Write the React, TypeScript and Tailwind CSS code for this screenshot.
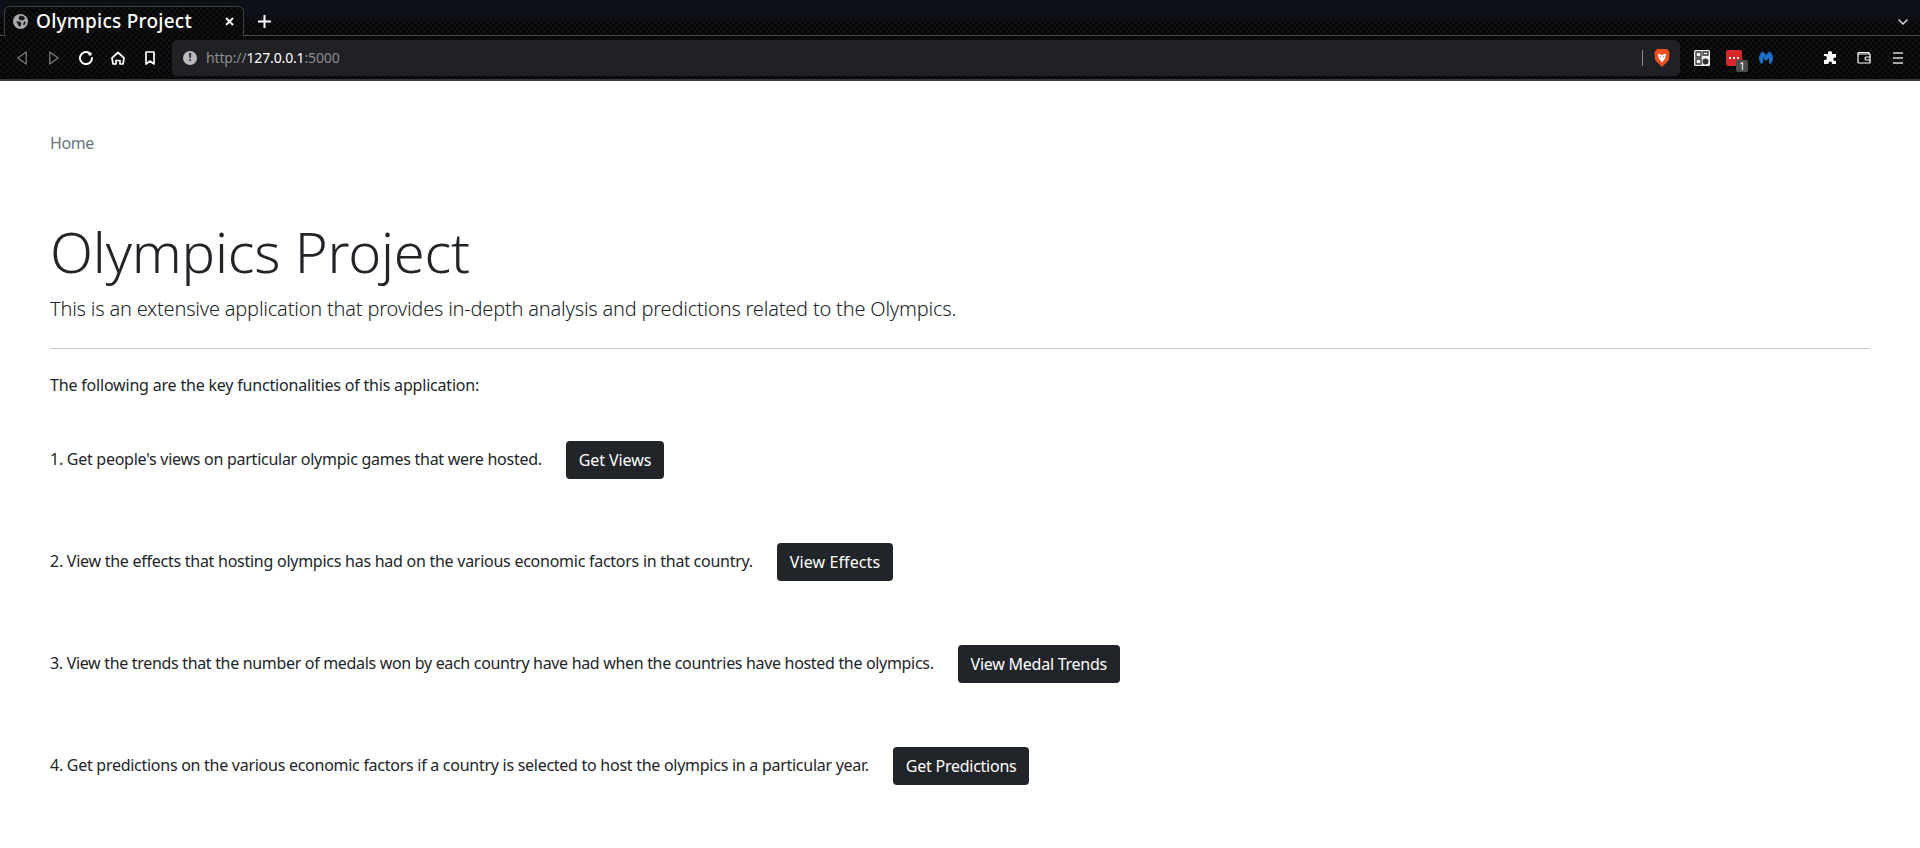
import React from "react";

const rows = [
  { t: "1. Get people's views on particular olympic games that were hosted.", b: "Get Views", tc: "tracking-[-0.265px]", bc: "tracking-[-0.1px]" },
  { t: "2. View the effects that hosting olympics has had on the various economic factors in that country.", b: "View Effects", tc: "tracking-[-0.26px]", bc: "tracking-[0.1px]" },
  { t: "3. View the trends that the number of medals won by each country have had when the countries have hosted the olympics.", b: "View Medal Trends", tc: "tracking-[-0.32px]", bc: "tracking-[-0.25px]" },
  { t: "4. Get predictions on the various economic factors if a country is selected to host the olympics in a particular year.", b: "Get Predictions", tc: "tracking-[-0.27px]", bc: "tracking-[-0.25px]" },
];

function Tri({ flip, cls }: { flip?: boolean; cls: string }) {
  return (
    <svg className={`shrink-0 ${cls}`} width="10" height="14" viewBox="0 0 10 14" fill="none" stroke="#77797d" strokeWidth="1.3" strokeLinejoin="round">
      <path d={flip ? "M.8 1 9.2 7 .8 13Z" : "M9.200 1 .8 7 9.200 13Z"} />
    </svg>
  );
}

function Icon({ w, h, cls, children }: { w: number; h: number; cls: string; children: React.ReactNode }) {
  return (
    <svg className={`shrink-0 ${cls}`} width={w} height={h} viewBox={`0 0 ${w} ${h}`} fill="none" stroke="white" strokeWidth="2" strokeLinejoin="round" strokeLinecap="round">
      {children}
    </svg>
  );
}

export default function App() {
  return (
    <div className="min-h-[848px] bg-white font-['Noto_Sans',sans-serif] text-[#212529]">
      <div className="h-[81px] bg-[#08090b] bg-[repeating-conic-gradient(#0f1012_0_25%,#050506_0_50%)] bg-[length:6px_6px] border-b-2 border-[#3a3b3e] flex flex-col">
        <div className="h-[36px] flex items-end pl-1 border-b border-[#4a4b4e] shrink-0 bg-[linear-gradient(#0e1018_0,#0e1018_14px,transparent_24px)]">
          <div className="w-[240px] h-[30px] bg-[#08090b] bg-[repeating-conic-gradient(#0f1012_0_25%,#050506_0_50%)] bg-[length:6px_6px] border border-b-0 border-[#3f4044] rounded-t-md flex items-center pl-[8px] pr-[9px] text-white -mb-px">
            <svg className="shrink-0" width="15" height="15" viewBox="0 0 15 15">
              <circle cx="7.500" cy="7.500" r="7.500" fill="#a9aaad" />
              <path d="M7 1.500 11 2.500 12 5 9.500 6.500 6.500 6 5.500 4Zm-4 6 3.500 0 2 2-1 3-2-.5-1-2.500Zm8 0 2 .5-1.500 3-1.500 0Z" fill="#1a1b1d" />
            </svg>
            <span className="ml-[8px] text-[19px] font-medium leading-none whitespace-nowrap tracking-[0.25px]">Olympics Project</span>
            <svg className="ml-auto shrink-0" width="9" height="9" viewBox="0 0 9 9" stroke="white" strokeWidth="1.800"><path d="M1 1 8 8M8 1 1 8" /></svg>
          </div>
          <svg className="ml-[14px] mb-[7px] shrink-0" width="13" height="13" viewBox="0 0 13 13" stroke="white" strokeWidth="2"><path d="M6.500 0V13M0 6.500H13" /></svg>
          <svg className="ml-auto mr-[12px] mb-[10px] shrink-0" width="10" height="6" viewBox="0 0 10 6" fill="none" stroke="#d8d8d8" strokeWidth="1.500"><path d="M.5.5 5 5 9.500.5" /></svg>
        </div>
        <div className="flex-1 flex items-center pl-[17px]">
          <Tri cls="" />
          <Tri flip cls="ml-[22px]" />
          <Icon w={14} h={14} cls="ml-[20px]">
            <path d="M10.500 2.200A6 6 0 1 0 13 7" />
            <circle cx="11" cy="3" r="1.800" fill="white" stroke="none" />
          </Icon>
          <Icon w={14} h={14} cls="ml-[18px]">
            <path d="M1 7 7 1.500 13 7 12 13H9V9.500H5V13H2Z" strokeWidth="1.700" />
          </Icon>
          <Icon w={10} h={14} cls="ml-[20px]">
            <path d="M1 1H9V13L5 10 1 13Z" strokeWidth="1.700" />
          </Icon>
          <div className="ml-[17px] w-[1508px] shrink-0 h-[36px] bg-[#202124] rounded-md flex items-center pl-[11px] text-[14px] tracking-[-0.15px]">
            <span className="w-[14px] h-[14px] rounded-full bg-[#b9babc] text-[#202124] text-[11px] font-bold flex items-center justify-center">!</span>
            <span className="ml-[9px] text-[#8c8d90]">http://</span>
            <span className="text-white">127.0.0.1</span>
            <span className="text-[#8c8d90]">:5000</span>
            <span className="ml-auto w-px h-[16px] bg-[#8a8b8e]" />
            <svg className="ml-[11px] mr-[10px]" width="16" height="18" viewBox="0 0 16 18">
              <path d="M3 0h10l2.500 3L15 11l-7 7-7-7-.5-8z" fill="#f0501e" />
              <path d="M4 4.500 8 6l4-1.500-.8 5L8 13.500 4.800 9.500z" fill="#fff" />
              <path d="M6 8h1M9 8h1" stroke="#f0501e" strokeWidth="1" />
            </svg>
          </div>
          <svg className="ml-[14px] shrink-0" width="16" height="16" viewBox="0 0 16 16">
            <rect width="16" height="16" rx="1.500" fill="#f2f2f2" />
            <path d="M2 2h5v5H2zM9 2h5v3H9zM2 9h5v5H2z" fill="none" stroke="#333" strokeWidth="1.300" />
            <circle cx="11.500" cy="11.500" r="3" fill="#333" />
          </svg>
          <div className="relative ml-[16px] w-[16px] h-[16px] bg-[#d9262b] rounded-[2px] flex items-center justify-center shrink-0">
            <span className="w-[2px] h-[2px] bg-white mx-[1px]" />
            <span className="w-[2px] h-[2px] bg-white mx-[1px]" />
            <span className="w-[2px] h-[2px] bg-white mx-[1px]" />
            <span className="absolute left-[10px] top-[10px] w-[12px] h-[12px] bg-[#4d4d4f] rounded-[2px] text-white text-[10px] leading-[12px] text-center">1</span>
          </div>
          <svg className="ml-[17px] shrink-0" width="14" height="14" viewBox="0 0 14 14">
            <path d="M7 4 10 .5C12.500 1.500 14 4 14 7c0 2.500-1 4.500-2.500 6L10 12V7L7 10 4 7v5l-1.500 1C1 11.500 0 9.500 0 7c0-3 1.500-5.500 4-6.500z" fill="#1d6fc4" />
          </svg>
          <svg className="ml-[50px] shrink-0" width="14" height="14" viewBox="0 0 14 14">
            <path d="M5 1.500a2 1.500 0 0 1 4 0V3h4v3.500h-1a1.700 1.700 0 0 0 0 3.500h1V13H9v-1a1.800 1.800 0 0 0-3.500 0v1H1V9h1a2 2 0 0 0 0-4H1V3h4z" fill="white" />
          </svg>
          <Icon w={14} h={13} cls="ml-[20px]">
            <path d="M12 3V1.500H2A1 1 0 0 0 1 3V11A1 1 0 0 0 2 12H13V3H2" strokeWidth="1.200" />
            <path d="M13 6H9.500a1.200 1.200 0 0 0 0 3H13" strokeWidth="1.200" />
          </Icon>
          <svg className="ml-[22px] shrink-0" width="10" height="12" viewBox="0 0 10 12" stroke="#d8d8d8" strokeWidth="1.600"><path d="M0 1H10M0 6H10M0 11H10" /></svg>
        </div>
      </div>

      <main className="px-[50px]">
        <nav className="pt-[50px] text-[#6c757d] text-[16px] leading-[24px] tracking-[-0.4px]">Home</nav>
        <h1 className="mt-[63px] text-[56px] font-light leading-[67px] tracking-[-0.2px]">Olympics Project</h1>
        <p className="mt-[9px] text-[20px] font-light leading-[30px] tracking-[-0.2px]">This is an extensive application that provides in-depth analysis and predictions related to the Olympics.</p>
        <hr className="mt-[24px] border-[#c9cacb]" />
        <p className="mt-[24px] text-[16px] leading-[24px] tracking-[-0.19px]">The following are the key functionalities of this application:</p>
        <div className="mt-[44px] flex flex-col gap-[64px]">
          {rows.map((r) => (
            <div key={r.b} className="flex items-center h-[38px]">
              <span className={`text-[16px] leading-[24px] -mt-[3px] ${r.tc}`}>{r.t}</span>
              <button className={`ml-[24px] h-[38px] px-[13px] rounded-[4px] bg-[#212529] text-white text-[16px] ${r.bc}`}>{r.b}</button>
            </div>
          ))}
        </div>
      </main>
    </div>
  );
}
